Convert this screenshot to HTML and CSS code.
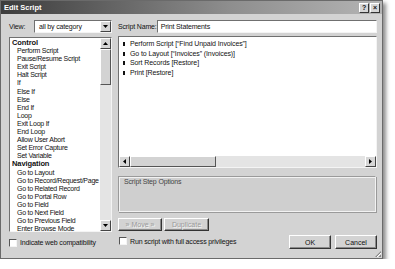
FILE: index.html
```html
<!DOCTYPE html>
<html lang="en">

<head>
    <meta charset="UTF-8">
    <title>Edit Script</title>
    <link rel="stylesheet" href="styles.css">
</head>

<body>
    <div class="dialog">
        <div class="titlebar">
            <span class="title">Edit Script</span>
            <span class="title-buttons">
                <span class="tbtn">?</span>
                <span class="tbtn">&times;</span>
            </span>
        </div>

        <div class="content">
            <!-- top fields -->
            <div class="field-row">
                <span>View:</span>
                <div class="select view-select">
                    <span>all by category</span>
                    <span class="drop-btn">
                        <svg width="5" height="3" viewBox="0 0 5 3"><path d="M0 0H5L2.5 3Z" fill="#000"/></svg>
                    </span>
                </div>
            </div>
            <div class="field-row">
                <span>Script Name:</span>
                <div class="textbox name-box">Print Statements</div>
            </div>

            <!-- step list -->
            <div class="steps-list">
                <ul class="steps">
                    <li class="group">Control</li>
                    <li>Perform Script</li>
                    <li>Pause/Resume Script</li>
                    <li>Exit Script</li>
                    <li>Halt Script</li>
                    <li>If</li>
                    <li>Else If</li>
                    <li>Else</li>
                    <li>End If</li>
                    <li>Loop</li>
                    <li>Exit Loop If</li>
                    <li>End Loop</li>
                    <li>Allow User Abort</li>
                    <li>Set Error Capture</li>
                    <li>Set Variable</li>
                    <li class="group">Navigation</li>
                    <li>Go to Layout</li>
                    <li>Go to Record/Request/Page</li>
                    <li>Go to Related Record</li>
                    <li>Go to Portal Row</li>
                    <li>Go to Field</li>
                    <li>Go to Next Field</li>
                    <li>Go to Previous Field</li>
                    <li>Enter Browse Mode</li>
                </ul>
                <div class="vscroll">
                    <span class="arrow-btn">
                        <svg width="5" height="3" viewBox="0 0 5 3"><path d="M0 3H5L2.5 0Z" fill="#000"/></svg>
                    </span>
                    <span class="vthumb"></span>
                    <span class="vtrack"></span>
                    <span class="arrow-btn">
                        <svg width="5" height="3" viewBox="0 0 5 3"><path d="M0 0H5L2.5 3Z" fill="#000"/></svg>
                    </span>
                </div>
            </div>

            <!-- script editing side -->
            <div class="right-col">
                <div class="script-box">
                    <ul class="script-lines">
                        <li>Perform Script [“Find Unpaid Invoices”]</li>
                        <li>Go to Layout [“Invoices” (Invoices)]</li>
                        <li>Sort Records [Restore]</li>
                        <li>Print [Restore]</li>
                    </ul>
                    <div class="hscroll">
                        <span class="arrow-btn">
                            <svg width="3" height="5" viewBox="0 0 3 5"><path d="M3 0V5L0 2.5Z" fill="#000"/></svg>
                        </span>
                        <span class="hthumb"></span>
                        <span class="htrack"></span>
                        <span class="arrow-btn">
                            <svg width="3" height="5" viewBox="0 0 3 5"><path d="M0 0V5L3 2.5Z" fill="#000"/></svg>
                        </span>
                    </div>
                </div>

                <div class="options">
                    <span class="options-label">Script Step Options</span>
                </div>

                <div class="edit-buttons">
                    <button class="btn disabled move-btn">» Move »</button>
                    <button class="btn disabled dup-btn">Duplicate</button>
                </div>
            </div>

            <!-- bottom row -->
            <div class="check-row">
                <span class="checkbox"></span>
                <span>Indicate web compatibility</span>
            </div>
            <div class="bottom-right">
                <div class="check-row">
                    <span class="checkbox"></span>
                    <span>Run script with full access privileges</span>
                </div>
                <div class="dialog-buttons">
                    <button class="btn ok-btn">OK</button>
                    <button class="btn cancel-btn">Cancel</button>
                </div>
            </div>
        </div>

        <span class="grip"></span>
    </div>
</body>

</html>
```

FILE: styles.css
```css
body {
    margin: 0;
    background-color: #ffffff;
    font-family: "Liberation Sans", Arial, sans-serif;
    font-size: 7px;
    letter-spacing: -0.15px;
    color: #111;
    white-space: nowrap;
}

.dialog {
    position: relative;
    width: 381px;
    height: 257px;
    border: 1px solid #6a6a6a;
    background-color: #d3d3d3;
    box-shadow: 3px 3px 4px rgba(0, 0, 0, 0.45);
    display: flex;
    flex-direction: column;
}

.titlebar {
    height: 13px;
    background: linear-gradient(to right, #3c3c3c, #8e8e8e 60%, #b4b4b4);
    display: flex;
    align-items: center;
    justify-content: space-between;
    padding: 0 2px 0 3px;
}

.title {
    color: #fff;
    font-weight: bold;
    font-size: 7.5px;
    letter-spacing: 0;
}

.title-buttons {
    display: flex;
    gap: 1px;
}

.tbtn {
    width: 8px;
    height: 8px;
    background-color: #d6d6d6;
    border: 1px solid;
    border-color: #fff #333 #333 #fff;
    font-size: 7px;
    font-weight: bold;
    line-height: 8px;
    text-align: center;
}

.content {
    display: grid;
    grid-template-columns: 103px 259px;
    grid-template-rows: 13px 196px 13px;
    column-gap: 6px;
    row-gap: 3px;
    padding: 6px 0 0 8px;
}

.field-row {
    display: flex;
    align-items: center;
    justify-content: space-between;
}

.select,
.textbox {
    height: 11px;
    background-color: #fff;
    border: 1px solid;
    border-color: #707070 #f4f4f4 #f4f4f4 #707070;
    display: flex;
    align-items: center;
}

.view-select {
    width: 78px;
    justify-content: space-between;
    padding-left: 4px;
    box-sizing: border-box;
    height: 13px;
}

.drop-btn,
.arrow-btn {
    width: 9px;
    height: 9px;
    background-color: #d6d6d6;
    border: 1px solid;
    border-color: #fff #444 #444 #fff;
    display: flex;
    align-items: center;
    justify-content: center;
    flex-shrink: 0;
}

.name-box {
    width: 216px;
    padding-left: 3px;
}

.steps-list {
    display: flex;
    background-color: #fff;
    border: 1px solid;
    border-color: #707070 #f4f4f4 #f4f4f4 #707070;
    margin-top: 1px;
    overflow: hidden;
}

.steps {
    list-style: none;
    margin: 0;
    padding: 1px 0 0 0;
    flex: 1;
    min-width: 0;
    overflow: hidden;
    line-height: 8.1px;
    letter-spacing: -0.25px;
}

.steps li {
    padding-left: 7px;
}

.steps li.group {
    padding-left: 2px;
    font-weight: bold;
    font-size: 7.5px;
    letter-spacing: -0.1px;
}

.vscroll {
    width: 11px;
    display: flex;
    flex-direction: column;
    flex-shrink: 0;
    background-color: #e4e4e4;
}

.vthumb {
    height: 34px;
    background-color: #d3d3d3;
    border: 1px solid;
    border-color: #fff #555 #555 #fff;
}

.vtrack,
.htrack {
    flex: 1;
}

.right-col {
    display: flex;
    flex-direction: column;
}

.script-box {
    height: 130px;
    background-color: #fff;
    border: 1px solid;
    border-color: #707070 #f4f4f4 #f4f4f4 #707070;
    display: flex;
    flex-direction: column;
}

.script-lines {
    list-style: none;
    margin: 0;
    padding: 2px 0 0 0;
    flex: 1;
    line-height: 9.7px;
    letter-spacing: -0.1px;
}

.script-lines li {
    display: flex;
    align-items: center;
    gap: 5px;
    padding-left: 4px;
}

.script-lines li::before {
    content: "";
    width: 2px;
    height: 4px;
    background-color: #111;
}

.hscroll {
    height: 11px;
    display: flex;
    background-color: #e4e4e4;
}

.hthumb {
    width: 84px;
    background-color: #d3d3d3;
    border: 1px solid;
    border-color: #fff #555 #555 #fff;
}

.options {
    margin-top: 8px;
    height: 32px;
    border: 1px solid;
    border-color: #9a9a9a #f2f2f2 #f2f2f2 #9a9a9a;
    box-shadow: inset 1px 1px 0 #f2f2f2, 1px 1px 0 #9a9a9a;
    background-color: #cfcfcf;
    padding: 1px 5px;
    margin-right: 1px;
}

.options-label {
    color: #444;
}

.edit-buttons {
    margin-top: 6px;
    display: flex;
    gap: 2px;
}

.btn {
    font-family: "Liberation Sans", Arial, sans-serif;
    font-size: 7px;
    height: 13px;
    padding: 0;
    background-color: #d3d3d3;
    border: 1px solid;
    border-color: #fff #333 #333 #fff;
    box-shadow: inset -1px -1px 0 #8a8a8a;
    color: #111;
}

.btn.disabled {
    color: #999;
    text-shadow: 1px 1px 0 #f4f4f4;
}

.move-btn {
    width: 44px;
}

.dup-btn {
    width: 45px;
}

.check-row {
    display: flex;
    align-items: center;
    gap: 3px;
    padding-top: 2px;
}

.checkbox {
    width: 6px;
    height: 6px;
    background-color: #fff;
    border: 1px solid;
    border-color: #555 #f4f4f4 #f4f4f4 #555;
}

.bottom-right {
    display: flex;
    justify-content: space-between;
    align-items: flex-start;
    padding-left: 1px;
}

.dialog-buttons {
    display: flex;
    gap: 4px;
}

.ok-btn,
.cancel-btn {
    width: 42px;
    height: 14px;
}

.grip {
    position: absolute;
    right: 1px;
    bottom: 1px;
    width: 6px;
    height: 6px;
    background: repeating-linear-gradient(135deg, transparent 0 1px, #888 1px 2px, #fff 2px 3px);
    clip-path: polygon(100% 0, 100% 100%, 0 100%);
}
```
